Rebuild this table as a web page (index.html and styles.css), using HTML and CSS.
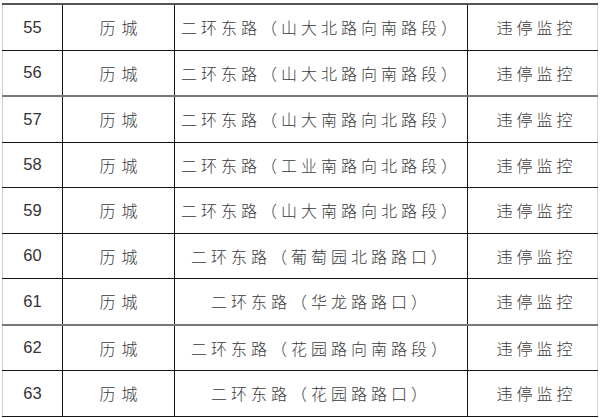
FILE: index.html
```html
<!DOCTYPE html>
<html lang="zh-CN">
<head>
<meta charset="utf-8">
<title>违停监控点位</title>
<link rel="stylesheet" href="styles.css">
</head>
<body>
<table class="sheet">
  <colgroup>
    <col class="c-no">
    <col class="c-dist">
    <col class="c-loc">
    <col class="c-type">
  </colgroup>
  <tbody>
    <tr><td class="no">55</td><td class="cn dist">历城</td><td class="cn">二环东路（山大北路向南路段）</td><td class="cn type">违停监控</td></tr>
    <tr class="gray"><td class="no">56</td><td class="cn dist">历城</td><td class="cn">二环东路（山大北路向南路段）</td><td class="cn type">违停监控</td></tr>
    <tr><td class="no">57</td><td class="cn dist">历城</td><td class="cn">二环东路（山大南路向北路段）</td><td class="cn type">违停监控</td></tr>
    <tr><td class="no">58</td><td class="cn dist">历城</td><td class="cn">二环东路（工业南路向北路段）</td><td class="cn type">违停监控</td></tr>
    <tr><td class="no">59</td><td class="cn dist">历城</td><td class="cn">二环东路（山大南路向北路段）</td><td class="cn type">违停监控</td></tr>
    <tr><td class="no">60</td><td class="cn dist">历城</td><td class="cn">二环东路（葡萄园北路路口）</td><td class="cn type">违停监控</td></tr>
    <tr class="gray"><td class="no">61</td><td class="cn dist">历城</td><td class="cn">二环东路（华龙路路口）</td><td class="cn type">违停监控</td></tr>
    <tr><td class="no">62</td><td class="cn dist">历城</td><td class="cn">二环东路（花园路向南路段）</td><td class="cn type">违停监控</td></tr>
    <tr><td class="no">63</td><td class="cn dist">历城</td><td class="cn">二环东路（花园路路口）</td><td class="cn type">违停监控</td></tr>
  </tbody>
</table>
</body>
</html>
```

FILE: styles.css
```css
html, body {
  margin: 0;
  padding: 0;
  background: #ffffff;
}

.sheet {
  margin: 3px 0 0 2px;
  width: 596px;
  border-collapse: collapse;
  table-layout: fixed;
  border-top: 2px solid #555;
  border-left: 1px solid #cfcfcf;
  border-right: 1px solid #d6d6d6;
}

.c-no { width: 60px; }
.c-dist { width: 112px; }
.c-loc { width: 293px; }
.c-type { width: 130px; }

.sheet td {
  height: 44.5px;
  padding: 0;
  border-bottom: 1px solid #151515;
  border-right: 1px solid #151515;
  text-align: center;
  vertical-align: middle;
}

.sheet td:first-child {
  border-left: 1px solid #cfcfcf;
}

.sheet td:last-child {
  border-right: 1px solid #d6d6d6;
}

.sheet tr.gray td {
  border-bottom: 2px solid #777;
}

.no {
  font-family: "Liberation Sans", Arial, sans-serif;
  font-size: 16.5px;
  color: #333;
  padding-left: 5px;
}

.cn {
  font-family: "Noto Sans CJK SC", "Noto Sans", sans-serif;
  font-weight: 300;
  font-size: 16px;
  letter-spacing: 4px;
  color: #3a3a3a;
  padding-left: 4px;
}

.cn.dist {
  letter-spacing: 6px;
  padding-left: 6px;
}

.cn.type {
  padding-left: 8px;
}
```
